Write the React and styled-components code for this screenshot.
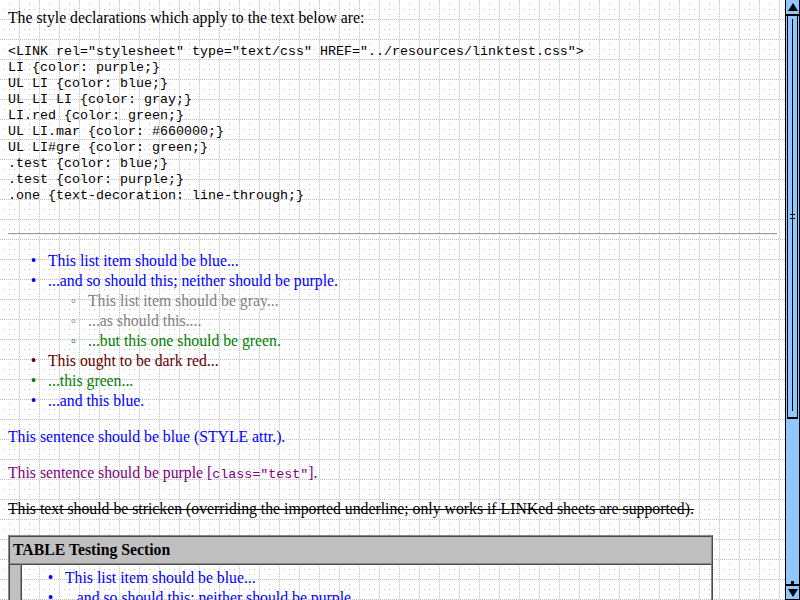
import React from "react";
import styled, { createGlobalStyle } from "styled-components";

const dots = (() => {
  const pts = [];
  for (let i = 0; i < 20; i += 2) {
    pts.push([i, 19]);
    pts.push([19, i]);
  }
  [[9, 4], [4, 9], [9, 9], [14, 9], [9, 14]].forEach((p) => pts.push(p));
  const rects = pts
    .map(([x, y]) => `%3Crect x='${x}' y='${y}' width='1' height='1'/%3E`)
    .join("");
  return `url("data:image/svg+xml,%3Csvg xmlns='http://www.w3.org/2000/svg' width='20' height='20' shape-rendering='crispEdges'%3E%3Cg fill='%23bdbdbd'%3E${rects}%3C/g%3E%3C/svg%3E")`;
})();

const Global = createGlobalStyle`
  html, body { margin: 0; padding: 0; height: 600px; overflow: hidden; }
  body {
    background-color: #fff;
    background-image: ${dots};
    font-family: "Liberation Serif", "Times New Roman", serif;
    font-size: 15.75px;
    line-height: 20px;
    color: #000;
  }
`;

const Page = styled.div`
  display: flex;
  width: 800px;
  height: 600px;
`;

const Content = styled.div`
  flex: 1;
  height: 600px;
  overflow: hidden;
  padding: 8px 8px 0;
  box-sizing: border-box;
`;

const Para = styled.p`
  margin: 0 0 16px;
  height: 20px;
  color: ${(p) => p.$color || "#000"};
  text-decoration: ${(p) => (p.$strike ? "line-through" : "none")};
`;

const Pre = styled.pre`
  margin: 0;
  font-family: "Liberation Mono", "Courier New", monospace;
  font-size: 13.33px;
  line-height: 16px;
`;

const Code = styled.code`
  font-family: "Liberation Mono", "Courier New", monospace;
  font-size: 13.33px;
  line-height: 14px;
`;

const Rule = styled.hr`
  margin: 29px 0 16px;
  height: 0;
  border: 0;
  border-top: 1px solid #9a9a9a;
  border-bottom: 1px solid #eeeeee;
`;

const List = styled.ul`
  margin: ${(p) => (p.$nested || p.$flush ? "0" : "0 0 16px")};
  padding-left: 40px;
  list-style: none;
`;

const Item = styled.li`
  display: list-item;
  color: ${(p) => p.$color};
  &::marker {
    content: "${(p) => (p.$circle ? "\\25E6" : "\\2022")}\\00a0\\00a0\\00a0";
    font-family: "Liberation Serif", serif;
  }
`;

const Table = styled.table`
  width: 705px;
  border-collapse: separate;
  border-spacing: 0;
  border: 1px solid;
  border-color: #8a8a8a #4a4a4a #4a4a4a #8a8a8a;
`;

const Cell = styled.td`
  padding: 3px;
  border: 1px solid;
  border-color: #4a4a4a #8a8a8a #8a8a8a #4a4a4a;
  background: ${(p) => (p.$silver ? "#c0c0c0" : "transparent")};
  vertical-align: top;
  width: ${(p) => p.$w || "auto"};
`;

const Strong = styled.strong`
  font-weight: bold;
`;

/* ---- scrollbar drawing ---- */
const Scrollbar = styled.div`
  width: 15px;
  height: 600px;
  flex-shrink: 0;
  box-sizing: border-box;
  background: #91c6ff;
  border-left: 1px solid #000;
  border-right: 1px solid #000;
  display: flex;
  flex-direction: column;
`;

const ArrowButton = styled.div`
  height: ${(p) => p.$h}px;
  flex-shrink: 0;
  box-sizing: border-box;
  display: flex;
  align-items: center;
  justify-content: center;
  border-bottom: ${(p) => (p.$top ? "2px solid #000" : "1px solid #000")};
  border-top: ${(p) => (p.$top ? "0" : "2px solid #000")};
`;

const Triangle = styled.div`
  width: 0;
  height: 0;
  border-left: 5px solid transparent;
  border-right: 5px solid transparent;
  ${(p) =>
    p.$down
      ? "border-top: 8px solid #000;"
      : "border-bottom: 8px solid #000;"}
`;

const Thumb = styled.div`
  height: 403px;
  flex-shrink: 0;
  margin: 0 1px;
  box-sizing: border-box;
  border-left: 1px solid #000;
  border-right: 1px solid #000;
  border-bottom: 2px solid #000;
  display: flex;
  justify-content: center;
  padding: 3px 0 6px;
`;

const Grip = styled.div`
  width: 1px;
  background: #000;
  height: 100%;
  position: relative;
  &::before,
  &::after {
    content: "";
    position: absolute;
    left: -2px;
    width: 5px;
    height: 1px;
    background: #000;
  }
  &::before { top: 195px; }
  &::after { top: 199px; }
`;

const Track = styled.div`
  flex: 1;
`;

const Stem = styled.div`
  align-self: center;
  width: 3px;
  height: 3px;
  background: #000;
  flex-shrink: 0;
`;

export default function App() {
  return (
    <>
      <Global />
      <Page>
        <Content>
          <Para>The style declarations which apply to the text below are:</Para>
          <Pre>{`<LINK rel="stylesheet" type="text/css" HREF="../resources/linktest.css">
LI {color: purple;}
UL LI {color: blue;}
UL LI LI {color: gray;}
LI.red {color: green;}
UL LI.mar {color: #660000;}
UL LI#gre {color: green;}
.test {color: blue;}
.test {color: purple;}
.one {text-decoration: line-through;}`}</Pre>
          <Rule />
          <List>
            <Item $color="#0000ff">This list item should be blue...</Item>
            <Item $color="#0000ff">
              ...and so should this; neither should be purple.
              <List $nested>
                <Item $circle $color="#808080">This list item should be gray...</Item>
                <Item $circle $color="#808080">...as should this....</Item>
                <Item $circle $color="#008000">...but this one should be green.</Item>
              </List>
            </Item>
            <Item $color="#660000">This ought to be dark red...</Item>
            <Item $color="#008000">...this green...</Item>
            <Item $color="#0000ff">...and this blue.</Item>
          </List>
          <Para $color="#0000ff">This sentence should be blue (STYLE attr.).</Para>
          <Para $color="#800080">
            This sentence should be purple [<Code>class="test"</Code>].
          </Para>
          <Para $strike>
            This text should be stricken (overriding the imported underline; only works if LINKed sheets are supported).
          </Para>
          <Table>
            <tbody>
              <tr>
                <Cell $silver colSpan={2}>
                  <Strong>TABLE Testing Section</Strong>
                </Cell>
              </tr>
              <tr>
                <Cell $silver $w="4px">&nbsp;</Cell>
                <Cell>
                  <List $flush>
                    <Item $color="#0000ff">This list item should be blue...</Item>
                    <Item $color="#0000ff">...and so should this; neither should be purple.</Item>
                  </List>
                </Cell>
              </tr>
            </tbody>
          </Table>
        </Content>
        <Scrollbar>
          <ArrowButton $top $h={16}>
            <Triangle />
          </ArrowButton>
          <Thumb>
            <Grip />
          </Thumb>
          <Track />
          <Stem />
          <ArrowButton $h={16}>
            <Triangle $down />
          </ArrowButton>
        </Scrollbar>
      </Page>
    </>
  );
}
